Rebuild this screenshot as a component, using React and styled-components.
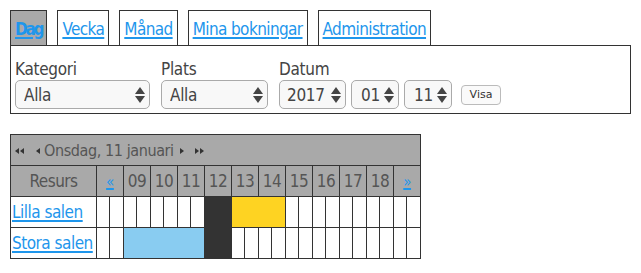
import React from 'react';
import styled, { createGlobalStyle } from 'styled-components';

const Global = createGlobalStyle`
  body {
    margin: 10px;
    background: #fff;
    font-family: "DejaVu Sans Condensed", "DejaVu Sans", sans-serif;
    color: #555;
  }
`

const Tabs = styled.div`
  display: flex;
  gap: 10px;
  align-items: flex-end;
`

const Tab = styled.a`
  display: block;
  height: 26px;
  padding: 8px 4px 0;
  border: 1px solid #333;
  border-bottom: none;
  background: ${props => props.active ? '#a9a9a9' : '#fff'};
  color: #1e96ec;
  font-size: 17px;
  line-height: 20px;
  font-weight: ${props => props.active ? 'bold' : 'normal'};
  letter-spacing: ${props => props.active ? '-2.2px' : '-0.6px'};
  text-decoration: underline;
  text-decoration-thickness: 2px;
  text-underline-offset: 2px;
  cursor: pointer;
`

const Panel = styled.div`
  width: 611px;
  height: 59px;
  border: 1px solid #333;
  padding: 4px;
  display: flex;
  gap: 11px;
  align-items: flex-end;
`

const Field = styled.div`
  display: flex;
  flex-direction: column;
`

const Label = styled.label`
  font-size: 17px;
  line-height: 22px;
  letter-spacing: -0.3px;
  color: #444;
`

const Row = styled.div`
  display: flex;
  gap: 5px;
  align-items: center;
`

const SelectWrap = styled.div`
  position: relative;
  width: ${props => props.w}px;
  height: 29px;
`

const Select = styled.select`
  appearance: none;
  width: 100%;
  height: 100%;
  border: 1px solid #aaa;
  border-radius: 5px;
  background: #f8f8f8;
  font-family: inherit;
  font-size: 17px;
  letter-spacing: -0.3px;
  color: #444;
  padding: 0 0 0 ${props => props.pad || 8}px;
`

const Arrows = styled.svg`
  position: absolute;
  right: 5px;
  top: 7px;
  pointer-events: none;
`

const VisaBtn = styled.button`
  margin-left: 4px;
  width: 40px;
  height: 20px;
  border: 1px solid #bbb;
  border-radius: 4px;
  background: #fafafa;
  font-family: "DejaVu Sans", sans-serif;
  font-size: 11px;
  color: #333;
  padding: 0;
`

const Sched = styled.table`
  margin-top: 20px;
  border-collapse: collapse;
  table-layout: fixed;
  width: 411px;
  tr { height: 31px; }
  td, th {
    border: 1px solid #333;
    padding: 0;
    white-space: nowrap;
    overflow: hidden;
  }
`

const TitleCell = styled.th`
  background: #a9a9a9;
  text-align: left;
  font-weight: normal;
  font-size: 16px;
  letter-spacing: -0.4px;
  color: #555;
  padding-left: 3px !important;
`

const HeadCell = styled.th`
  background: #a9a9a9;
  font-weight: normal;
  font-size: 17px;
  letter-spacing: -0.5px;
  color: #555;
  text-align: center;
`

const NavLink = styled.a`
  color: #1e96ec;
  font-size: 15px;
  text-decoration: underline;
  text-decoration-thickness: 2px;
`

const NameCell = styled.td`
  font-size: 17px;
  letter-spacing: -0.5px;
  padding-left: 1px !important;
  a {
    color: #1e96ec;
    text-decoration: underline;
    text-decoration-thickness: 2px;
    text-underline-offset: 2px;
  }
`

const Slot = styled.td`
  background: ${props => props.bg || '#fff'};
`

const TriIcon = styled.svg`
  vertical-align: middle;
  margin: ${props => props.m};
`

const Tri = ({ dir, double, m }) => (
  <TriIcon m={m} width={double ? 9 : 5} height="8" viewBox={`0 0 ${double ? 9 : 5} 8`}>
    {dir === 'left' ? (
      <>
        <polygon points="4,1 0,4 4,7" fill="#333" />
        {double && <polygon points="9,1 5,4 9,7" fill="#333" />}
      </>
    ) : (
      <>
        <polygon points="0,1 4,4 0,7" fill="#333" />
        {double && <polygon points="5,1 9,4 5,7" fill="#333" />}
      </>
    )}
  </TriIcon>
)

const Updown = () => (
  <Arrows width="10" height="16" viewBox="0 0 10 16">
    <polygon points="5,0 10,7 0,7" fill="#444" />
    <polygon points="0,9 10,9 5,16" fill="#444" />
  </Arrows>
)

const Sel = ({ w, value, pad }) => (
  <SelectWrap w={w}>
    <Select pad={pad} defaultValue={value}>
      <option>{value}</option>
    </Select>
    <Updown />
  </SelectWrap>
)

const hours = ['09', '10', '11', '12', '13', '14', '15', '16', '17', '18']

function App() {
  const cols = [86]
  for (let i = 0; i < 24; i++) cols.push(i % 2 ? 14 : 13)

  const blank = (n, k) => Array.from({ length: n }, (_, i) => <Slot key={k + i} />)

  return (
    <>
      <Global />
      <Tabs>
        <Tab active>Dag</Tab>
        <Tab>Vecka</Tab>
        <Tab>Månad</Tab>
        <Tab>Mina bokningar</Tab>
        <Tab>Administration</Tab>
      </Tabs>
      <Panel>
        <Field>
          <Label>Kategori</Label>
          <Sel w={135} value="Alla" />
        </Field>
        <Field>
          <Label>Plats</Label>
          <Sel w={107} value="Alla" />
        </Field>
        <Field>
          <Label>Datum</Label>
          <Row>
            <Sel w={67} value="2017" pad={7} />
            <Sel w={48} value="01" pad={9} />
            <Sel w={48} value="11" pad={9} />
            <VisaBtn>Visa</VisaBtn>
          </Row>
        </Field>
      </Panel>

      <Sched>
        <colgroup>
          {cols.map((w, i) => <col key={i} style={{ width: w }} />)}
        </colgroup>
        <thead>
          <tr>
            <TitleCell colSpan={25}>
              <Tri dir="left" double m="0 0 0 1px" />
              <Tri dir="left" m="0 3px 0 12px" />
              Onsdag, 11 januari
              <Tri dir="right" m="0 0 0 6px" />
              <Tri dir="right" double m="0 0 0 10px" />
            </TitleCell>
          </tr>
          <tr>
            <HeadCell>Resurs</HeadCell>
            <HeadCell colSpan={2}><NavLink>«</NavLink></HeadCell>
            {hours.map(h => <HeadCell key={h} colSpan={2}>{h}</HeadCell>)}
            <HeadCell colSpan={2}><NavLink>»</NavLink></HeadCell>
          </tr>
        </thead>
        <tbody>
          <tr>
            <NameCell><a href="#">Lilla salen</a></NameCell>
            {blank(8, 'a')}
            <Slot colSpan={2} bg="#333" />
            <Slot colSpan={4} bg="#fed322" />
            {blank(10, 'b')}
          </tr>
          <tr>
            <NameCell><a href="#">Stora salen</a></NameCell>
            {blank(2, 'c')}
            <Slot colSpan={6} bg="#89ccf1" />
            <Slot colSpan={2} bg="#333" />
            {blank(14, 'd')}
          </tr>
        </tbody>
      </Sched>
    </>
  )
}

export default App
